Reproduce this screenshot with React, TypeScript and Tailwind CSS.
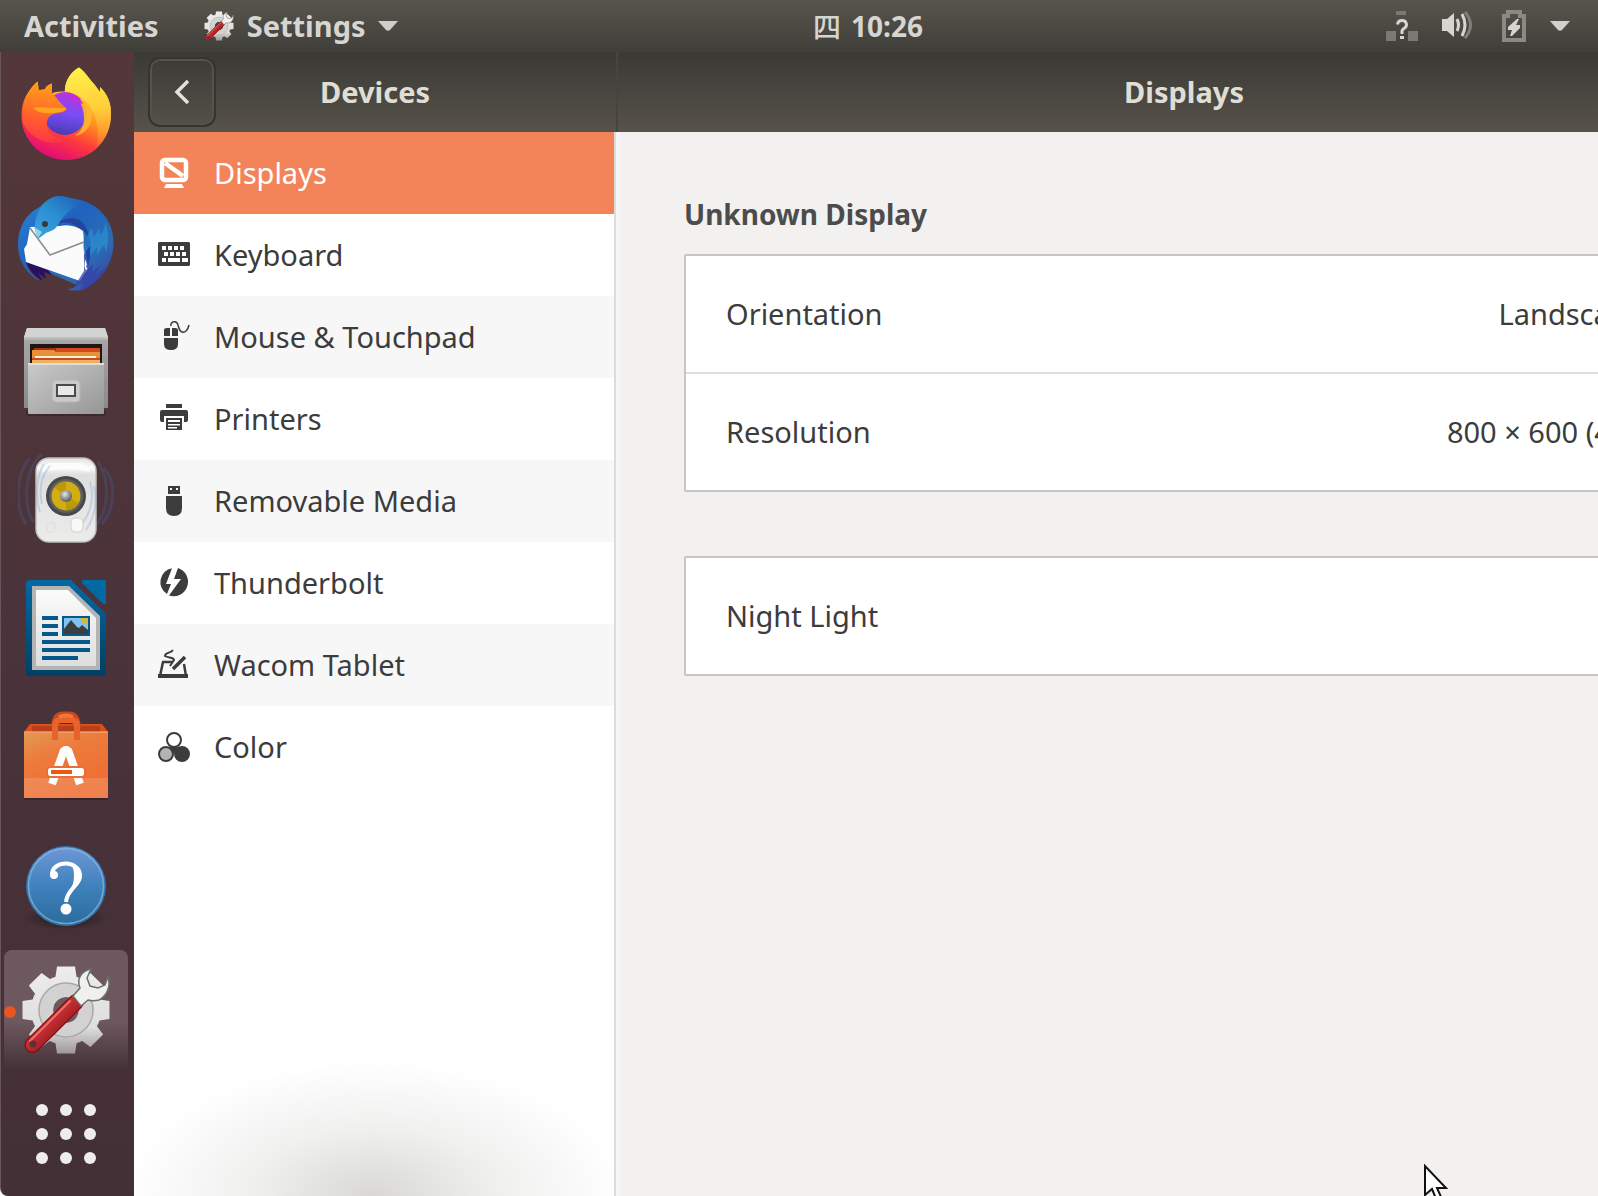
import type { ReactNode } from "react";

type IconProps = { className?: string };

function Firefox() {
  return (
    <svg viewBox="0 0 96 96" className="size-24" aria-hidden="true">
      <defs>
        <linearGradient id="ffBody" x1="0.75" y1="0.05" x2="0.35" y2="1">
          <stop offset="0" stopColor="#fff44f" />
          <stop offset="0.3" stopColor="#ffc02e" />
          <stop offset="0.5" stopColor="#ff8a1e" />
          <stop offset="0.72" stopColor="#ff3b3b" />
          <stop offset="1" stopColor="#e0087c" />
        </linearGradient>
        <linearGradient id="ffFlame" x1="0.5" y1="0" x2="0.6" y2="1">
          <stop offset="0" stopColor="#fff04a" />
          <stop offset="0.5" stopColor="#ffcf3a" />
          <stop offset="1" stopColor="#ff9a3c" stopOpacity="0.2" />
        </linearGradient>
        <linearGradient id="ffGlobe" x1="0.6" y1="0" x2="0.4" y2="1">
          <stop offset="0" stopColor="#b833e1" />
          <stop offset="0.5" stopColor="#7a4df5" />
          <stop offset="1" stopColor="#473bb0" />
        </linearGradient>
        <linearGradient id="ffHead" x1="0.4" y1="0" x2="0.3" y2="1">
          <stop offset="0" stopColor="#ffa21a" />
          <stop offset="0.5" stopColor="#ff6a28" />
          <stop offset="1" stopColor="#ff3348" />
        </linearGradient>
      </defs>
      <path
        d="M61 1.5C68 7 72 14 76 18l6 8v-5c8 8 11 16 11 27 0 26-19 46-44.500 46S3.500 74 3.500 50C3.500 34 10 24 19.700 15.500l1 9c2-1 4-1 6-1 1-3 4-5 7-6l0 10c4-2 8-2 13-2C47 14 53 6 61 1.500Z"
        fill="url(#ffBody)"
      />
      <path d="M61 1.500C68 7 72 14 76 18l6 8v-5c8 8 11 16 11 27 0 14-5 26-15 34 4-14 2-38-14-50-6-4-13-6-17-7C47 14 53 6 61 1.500Z" fill="url(#ffFlame)" />
      <circle cx="47" cy="47.500" r="21.500" fill="url(#ffGlobe)" />
      <path d="M60 33c8 0 14 8 14 17 0 10-7 18-17 20 6-4 9-10 9-17 0-8-2-14-6-20Z" fill="#ffb52e" opacity="0.9" />
      <path d="M56 34c2 2 4 3 9 4-2-5-6-8-11-9-3 0-3 2 2 5Z" fill="#c52fd6" />
      <path
        d="M19.700 15.500l1 9c2-1 4-1 6-1 1-3 4-5 7-6l0 10c5 3 7 9 15 15-1 4-6 4-11 5-6 1-9 5-9 11 1 8 7 14 16 16-9 5-30 2-40-18C3 38 11 22 19.700 15.500Z"
        fill="url(#ffHead)"
      />
      <path d="M15 42c10-2 20 1 33 0-1 4-7 4-12 5-7 1-16 0-21-5Z" fill="#ffb31f" opacity="0.8" />
    </svg>
  );
}

function Thunderbird() {
  return (
    <svg viewBox="0 0 96 96" className="size-24 overflow-visible" aria-hidden="true">
      <defs>
        <linearGradient id="tbBody" x1="0" y1="0" x2="1" y2="1">
          <stop offset="0" stopColor="#2a86d6" />
          <stop offset="0.4" stopColor="#1f63bf" />
          <stop offset="0.7" stopColor="#2b6db4" />
          <stop offset="1" stopColor="#3a3aa0" />
        </linearGradient>
        <linearGradient id="tbHead" x1="0.2" y1="1" x2="1" y2="0">
          <stop offset="0" stopColor="#3ba0e0" />
          <stop offset="0.5" stopColor="#2a8ed0" />
          <stop offset="1" stopColor="#1f5fb8" />
        </linearGradient>
      </defs>
      <path
        d="M34 4C42 0 50 4 58 5c22 4 37 20 37.500 43C96 68 84 86 66 95c-5 2-12 2-17 0 5 0 8-2 10-4L8 69c3 9 9 15 17 19C9 82 0 68 0 50 0 34 8 20 20 14Z"
        fill="url(#tbBody)"
      />
      <path d="M8 68c4 9 9 15 17 19l-5-8 8 6-2-7 8 3-4-5Z" fill="#2c0f5e" />
      <path d="M38 30c12-4 22 0 26 10 2 10 4 20 6 32 4-12 4-30-4-42C60 22 48 22 38 30Z" fill="#23449f" />
      <path
        d="M12 33l30-1c8-2 17 0 23 5 2 8-1 16 2 22-3 4 4 10 1 14 3 2 1 4-1 6l-5 8L8 68 6 55l3-5Z"
        fill="#fbfbfb"
      />
      <path d="M12 34L32 61L66 48" fill="none" stroke="#8d8d8d" strokeWidth="1.500" />
      <path
        d="M40 2c6 0 14 2 20 8-8 6-16 12-20 21-4 6-8 6-12 8l-8 6-3-9c-1-8 2-18 8-26 4-4 8-7 15-8Z"
        fill="url(#tbHead)"
      />
      <path d="M16 33l8 5-4 6Z" fill="#8ed6e2" />
      <circle cx="27" cy="30" r="3" fill="#3c3936" />
      <path
        d="M64 34c4 12 1 18 2 26l6-8 0 10 7-9 0 8 7-10 2 7c3-10 3-20-1-30 0 6-2 10-5 13l-1-7-5 9-2-9-5 8Z"
        fill="#2fa3e0"
        opacity="0.45"
      />
      <path d="M66 58c4 8-2 12 2 18l7-6-1 8 9-7-6 10 12-8c-6 10-12 18-26 24l2-8-9 4 10-16Z" fill="#3840a6" opacity="0.75" />
    </svg>
  );
}

function Files() {
  return (
    <svg viewBox="0 0 96 96" className="size-24" aria-hidden="true">
      <defs>
        <linearGradient id="fiBack" x1="0" y1="0" x2="0" y2="1">
          <stop offset="0" stopColor="#dcdcdc" />
          <stop offset="0.12" stopColor="#c2c2c2" />
          <stop offset="0.16" stopColor="#a6a6a6" />
          <stop offset="1" stopColor="#8a8a8a" />
        </linearGradient>
        <linearGradient id="fiFront" x1="0" y1="0" x2="1" y2="1">
          <stop offset="0" stopColor="#cacaca" />
          <stop offset="1" stopColor="#969696" />
        </linearGradient>
      </defs>
      <rect x="8" y="88" width="80" height="6" rx="3" fill="#000" opacity="0.2" />
      <path d="M9 6h78l3 9v71H6V15Z" fill="url(#fiBack)" />
      <path d="M9 6h78l3 9H6Z" fill="#d3d3d3" />
      <rect x="12" y="22" width="72" height="20" fill="#201714" />
      <path d="M16 26h66v4H16Z" fill="#a33412" />
      <path d="M38 26h44v6H38Z" fill="#d24a1b" />
      <path d="M14 28h22l2 2h44v12H14Z" fill="#e88f3c" />
      <rect x="17" y="34" width="61" height="2" fill="#fff0dc" />
      <rect x="14" y="36" width="68" height="2" fill="#c94a1b" />
      <rect x="14" y="38" width="68" height="3" fill="#f0b062" />
      <rect x="10" y="41" width="76" height="51" rx="1" fill="url(#fiFront)" />
      <rect x="10" y="41" width="76" height="2" fill="#dedede" />
      <rect x="34" y="58" width="28" height="22" rx="4" fill="#c9c9c9" stroke="#b5b5b5" />
      <rect x="39" y="63" width="18" height="11" fill="#e9e9e9" stroke="#4a4a4a" strokeWidth="2" />
    </svg>
  );
}

function Rhythmbox() {
  return (
    <svg viewBox="0 0 96 96" className="size-24" aria-hidden="true">
      <defs>
        <linearGradient id="rbBody" x1="0" y1="0" x2="0" y2="1">
          <stop offset="0" stopColor="#e4e4e2" />
          <stop offset="0.12" stopColor="#fafafa" />
          <stop offset="0.2" stopColor="#dededc" />
          <stop offset="1" stopColor="#ececeb" />
        </linearGradient>
        <radialGradient id="rbDome" cx="0.4" cy="0.35" r="0.7">
          <stop offset="0" stopColor="#e8e8e8" />
          <stop offset="1" stopColor="#4c4c50" />
        </radialGradient>
      </defs>
      <g fill="none" stroke="#4a5d96" strokeWidth="3" opacity="0.32">
        <path d="M12 8C-3 24-3 58 8 74" />
        <path d="M24 4C5 20 5 60 16 72" />
        <path d="M86 18C98 32 98 56 84 74" />
        <path d="M80 12C92 30 92 60 76 78" />
      </g>
      <rect x="18" y="8" width="60" height="84" rx="13" fill="url(#rbBody)" stroke="#bdbdbb" strokeWidth="1.500" />
      <path d="M24 22q1-8 8-9h32q7 1 8 9-24-6-48 0Z" fill="#fff" opacity="0.7" />
      <circle cx="48" cy="46" r="20" fill="#45484c" />
      <circle cx="48" cy="46" r="17" fill="#5d6063" />
      <circle cx="48" cy="46" r="14.500" fill="#d2ae12" />
      <path d="M48 46L36 37a15 15 0 0 1 12-6Z" fill="#ad8b04" opacity="0.6" />
      <path d="M48 46l13 7a15 15 0 0 1-13 8Z" fill="#ad8b04" opacity="0.6" />
      <circle cx="48" cy="46" r="6" fill="url(#rbDome)" />
      <g fill="none" stroke="#8fb0dc" strokeWidth="2" opacity="0.4">
        <path d="M32 16C23 26 21 40 24 54" />
        <path d="M26 14C18 26 17 48 22 62" />
        <path d="M72 32C76 46 74 62 62 76" />
        <path d="M76 36C80 54 76 68 68 80" />
      </g>
      <rect x="53" y="68" width="12" height="14" rx="4" fill="#f8f8f8" stroke="#d2d2d0" />
      <rect x="29" y="73" width="8" height="9" rx="2" fill="none" stroke="#dededc" />
    </svg>
  );
}

function Writer() {
  return (
    <svg viewBox="0 0 96 96" className="size-24 overflow-visible" aria-hidden="true">
      <defs>
        <linearGradient id="wrBlue" x1="0" y1="0" x2="0" y2="1">
          <stop offset="0" stopColor="#0369a3" />
          <stop offset="1" stopColor="#023f63" />
        </linearGradient>
        <linearGradient id="wrPage" x1="0" y1="0" x2="0" y2="1">
          <stop offset="0" stopColor="#fbfbfb" />
          <stop offset="1" stopColor="#dedede" />
        </linearGradient>
      </defs>
      <path d="M12 2H53L88 36V94q0 4-4 4H12q-4 0-4-4V6q0-4 4-4Z" fill="url(#wrBlue)" />
      <path d="M64 2H88V26H85L64 5Z" fill="#0369a3" />
      <path d="M14 8H51L82 38V92H14Z" fill="#b4b4b4" />
      <path d="M18 12H50L78 40V88H18Z" fill="url(#wrPage)" />
      <path d="M24 38h16v4H24Zm0 8h16v4H24Zm0 8h16v4H24Zm0 8h48v4H24Zm0 8h48v4H24Zm0 8h36v4H24Z" fill="#04588a" />
      <rect x="44" y="38" width="28" height="20" fill="#04588a" />
      <rect x="46" y="40" width="24" height="16" fill="#7fc3f2" />
      <path d="M62 40h8v7q-6 0-8-7Z" fill="#d3b93f" />
      <path d="M46 56v-5l7-9 6 7 2 1 3-3 6 5v4Z" fill="#3c3e40" />
    </svg>
  );
}

function Software() {
  return (
    <svg viewBox="0 0 96 96" className="size-24" aria-hidden="true">
      <defs>
        <linearGradient id="swBag" x1="0" y1="0" x2="0.5" y2="1">
          <stop offset="0" stopColor="#e39a53" />
          <stop offset="0.4" stopColor="#ec7b3c" />
          <stop offset="1" stopColor="#ef6d33" />
        </linearGradient>
      </defs>
      <rect x="6" y="90" width="84" height="4" rx="2" fill="#000" opacity="0.25" />
      <path d="M12 18H84L90 26H6Z" fill="#de4f17" />
      <path d="M14 20H82V26H14Z" fill="#b5401a" />
      <path d="M36 24V18q1-10 9-10h6q8 0 9 10v6" fill="none" stroke="#c8471b" strokeWidth="5" />
      <rect x="6" y="25.500" width="84" height="66.500" fill="url(#swBag)" />
      <rect x="6" y="72" width="84" height="20" fill="#fff" opacity="0.14" />
      <rect x="6" y="25.500" width="84" height="1.500" fill="#f59b6b" />
      <path d="M37 34V20q0-6 6-6h10q6 0 6 6v14" fill="none" stroke="#e8622c" strokeWidth="6" />
      <path d="M41 11q7-3 14 0" fill="none" stroke="#f0763c" strokeWidth="4" />
      <path d="M34 78L46 44h4L62 78" fill="none" stroke="#fff" strokeWidth="8" strokeLinejoin="bevel" />
      <rect x="28" y="60" width="40" height="12" rx="5" fill="#ec6d36" />
      <rect x="30" y="62" width="36" height="8" rx="2.500" fill="#fff" />
      <rect x="33" y="64" width="21" height="4" fill="#f0580f" />
    </svg>
  );
}

function Help() {
  return (
    <svg viewBox="0 0 96 96" className="size-24" aria-hidden="true">
      <defs>
        <linearGradient id="hpBlue" x1="0" y1="0" x2="0" y2="1">
          <stop offset="0" stopColor="#6f97d6" />
          <stop offset="0.5" stopColor="#3f82bd" />
          <stop offset="1" stopColor="#2a6c9c" />
        </linearGradient>
        <radialGradient id="hpShade">
          <stop offset="0.6" stopColor="#000" stopOpacity="0.22" />
          <stop offset="1" stopColor="#000" stopOpacity="0" />
        </radialGradient>
      </defs>
      <ellipse cx="48" cy="84" rx="42" ry="12" fill="url(#hpShade)" />
      <circle cx="48" cy="52" r="39.500" fill="url(#hpBlue)" stroke="#2f72ae" />
      <circle cx="48" cy="52" r="37.500" fill="none" stroke="#8fb9de" strokeWidth="1.500" opacity="0.7" />
      <path
        d="M34 41C34 33 41 29.500 48 29.500S61.500 34 61.500 42C61.500 52 49 55 48 68"
        fill="none"
        stroke="#fff"
        strokeWidth="4"
      />
      <path d="M52 29c8 1 12 6 12 13 0 8-9 13-14 20 3-8 6-12 6-20 0-6-1-10-4-13Z" fill="#fff" />
      <circle cx="36" cy="41" r="4" fill="#fff" />
      <circle cx="48" cy="75" r="5.500" fill="#fff" />
    </svg>
  );
}

const teeth = [0, 45, 90, 135, 180, 225, 270, 315];

function SettingsGear({ className = "size-24" }: IconProps) {
  return (
    <svg viewBox="0 0 96 96" className={className} aria-hidden="true">
      <defs>
        <linearGradient id="sgHandle" x1="0" y1="0" x2="1" y2="1">
          <stop offset="0.3" stopColor="#d93a38" />
          <stop offset="0.7" stopColor="#9c1a22" />
        </linearGradient>
        <linearGradient id="sgFade" gradientUnits="userSpaceOnUse" x1="0" y1="5" x2="0" y2="92">
          <stop offset="0" stopColor="#ededed" />
          <stop offset="0.7" stopColor="#dedede" />
          <stop offset="1" stopColor="#9f959b" />
        </linearGradient>
        <mask id="sgHole">
          <rect width="96" height="96" fill="#fff" />
          <circle cx="48" cy="48" r="13" fill="#000" />
        </mask>
        <mask id="sgShape">
          <circle cx="48" cy="48" r="35" fill="#fff" />
          {teeth.map((angle) => (
            <path key={angle} d="M37 18L39 4.500H57L59 18Z" fill="#fff" transform={`rotate(${angle} 48 48)`} />
          ))}
          <circle cx="48" cy="48" r="13" fill="#000" />
        </mask>
      </defs>
      <rect width="96" height="96" fill="url(#sgFade)" mask="url(#sgShape)" />
      <circle cx="48" cy="48" r="27" fill="#d3d2d3" stroke="#aaa8aa" strokeWidth="1.500" mask="url(#sgHole)" />
      <path d="M14.500 83L58 40" stroke="#7e1118" strokeWidth="16" strokeLinecap="round" />
      <path d="M14.500 83L58 40" stroke="url(#sgHandle)" strokeWidth="13.500" strokeLinecap="round" />
      <path d="M12 79L52 39" stroke="#e8746c" strokeWidth="2" strokeLinecap="round" />
      <path
        d="M55 34L62 26C58 16 64 9 73 7l-4 9 3 8 8 2 7-3 3-8c3 9-1 19-9 23-4 1-8 1-11 0l-7 6Z"
        fill="#f0f1ec"
        stroke="#6e706a"
        strokeWidth="1.500"
      />
      <circle cx="15" cy="82" r="3.500" fill="#5c3034" />
    </svg>
  );
}

function AppGrid() {
  const stops = [24, 48, 72];
  return (
    <svg viewBox="0 0 96 96" className="size-24" fill="#eeedec" aria-hidden="true">
      {stops.map((y) => stops.map((x) => <circle key={`${x}-${y}`} cx={x} cy={y} r="6" />))}
    </svg>
  );
}

function SideIcon({ children }: { children: ReactNode }) {
  return (
    <svg viewBox="0 0 32 32" className="size-8 shrink-0 overflow-visible" fill="currentColor" aria-hidden="true">
      {children}
    </svg>
  );
}

const devices: { label: string; icon: ReactNode }[] = [
  {
    label: "Displays",
    icon: (
      <>
        <rect x="4" y="3" width="24" height="20" rx="3" fill="none" stroke="currentColor" strokeWidth="4.500" />
        <path d="M7 6L25 19" stroke="currentColor" strokeWidth="4.500" />
        <path d="M8 27H24l2 4H6Z" />
      </>
    ),
  },
  {
    label: "Keyboard",
    icon: (
      <path
        fillRule="evenodd"
        d="M1 3H31l1 1V26l-1 1H1l-1-1V4ZM4 7v4h4V7Zm6 0v4h4V7Zm6 0v4h4V7Zm6 0v4h4V7ZM6 13v4h4v-4Zm6 0v4h4v-4Zm6 0v4h4v-4Zm6 0v4h4v-4ZM4 19v4h4v-4Zm6 0v4h12v-4Zm14 0v4h6v-4Z"
      />
    ),
  },
  {
    label: "Mouse & Touchpad",
    icon: (
      <>
        <path d="M6 15V9q0-2 3-2h3v8ZM14 15V7h3q3 0 3 2v6ZM6 17H20v6q0 6-7 6t-7-6Z" />
        <path d="M13 5C12 0 19-1 20 4C21 7 21 10 24 11S30 9 31 4" fill="none" stroke="currentColor" strokeWidth="1.500" />
      </>
    ),
  },
  {
    label: "Printers",
    icon: (
      <path
        fillRule="evenodd"
        d="M8 1H24V5H8ZM4 7H28q2 0 2 2V17q0 2-2 2H26V13H6V19H4q-2 0-2-2V9q0-2 2-2ZM8 15H24V27H8ZM10 17v2H22V17ZM10 21v1.500H22V21ZM10 24v1.500h9V24Z"
      />
    ),
  },
  {
    label: "Removable Media",
    icon: (
      <path
        fillRule="evenodd"
        d="M10 1H22V9H10ZM12 3v2h2V3ZM18 3v2h2V3ZM8 11H24V23q0 8-8 8t-8-8Z"
      />
    ),
  },
  {
    label: "Thunderbolt",
    icon: (
      <>
        <path d="M14 1.300L8 17h5L9 27A14 14 0 0 1 14 1.300Z" />
        <path d="M20 1A14 14 0 1 1 11 28.600L23 12H16Z" />
      </>
    ),
  },
  {
    label: "Wacom Tablet",
    icon: (
      <>
        <path d="M4 13H15M5 13L2 27H28L26 15" fill="none" stroke="currentColor" strokeWidth="2.500" />
        <path d="M0 25H30V29H0Z" />
        <path d="M27 8L15 20" stroke="currentColor" strokeWidth="3.500" />
        <path d="M15 1C12 5 7 3 7 7C10 9 16 8 16 11L12 17" fill="none" stroke="currentColor" strokeWidth="2" />
      </>
    ),
  },
  {
    label: "Color",
    icon: (
      <g stroke="currentColor" strokeWidth="2">
        <circle cx="16" cy="9" r="7" fill="#fff" />
        <circle cx="8" cy="23" r="7" fill="#b3b3b3" />
        <circle cx="24" cy="23" r="7" />
        <path d="M12 16h8l-3 6h-3Z" stroke="none" />
      </g>
    ),
  },
];

const launchers: { label: string; icon: ReactNode }[] = [
  { label: "Firefox", icon: <Firefox /> },
  { label: "Thunderbird", icon: <Thunderbird /> },
  { label: "Files", icon: <Files /> },
  { label: "Rhythmbox", icon: <Rhythmbox /> },
  { label: "LibreOffice Writer", icon: <Writer /> },
  { label: "Ubuntu Software", icon: <Software /> },
  { label: "Help", icon: <Help /> },
];

function Caret() {
  return (
    <svg viewBox="0 0 20 10" className="h-2.5 w-5" fill="#cfcfcb" aria-hidden="true">
      <path d="M0 0H20L12 9q-2 1.500-4 0Z" />
    </svg>
  );
}

function TopBar() {
  return (
    <header className="grid h-13 shrink-0 grid-cols-[1fr_auto_1fr] items-center bg-linear-to-b from-[#59554c] to-[#3f3e39] pr-7 pl-6 text-[29px] leading-10 font-bold text-[#d6d5d2] [text-shadow:0_0_3px_#22211e]">
      <div className="flex items-center gap-11">
        <button>Activities</button>
        <button className="flex items-center gap-3">
          <SettingsGear className="size-8" />
          <span>Settings</span>
          <Caret />
        </button>
      </div>
      <button className="ml-[142px] flex items-center gap-2.5 text-[28px]">
        <span className="font-['Noto_Sans_CJK_SC',sans-serif] font-medium">四</span>
        <span>10:26</span>
      </button>
      <button aria-label="System menu" className="flex items-center justify-self-end">
        <svg viewBox="0 0 32 32" className="mr-6 size-8" aria-hidden="true">
          <path d="M0 21H10V31H0ZM22 21H32V31H22ZM10 1H20V5H10Z" fill="#7b7974" />
          <path d="M11.500 14.500Q12 10.500 16 10.500T20.500 14.500Q20.500 17 18 18.500T16 22.500V24" fill="none" stroke="#d6d5d2" strokeWidth="3" />
          <path d="M14 26H18V29H14Z" fill="#d6d5d2" />
        </svg>
        <svg viewBox="0 0 30 32" className="mr-[30px] h-8 w-[30px]" fill="none" strokeWidth="3" aria-hidden="true">
          <path d="M0 9H5L12 3V27L5 21H0Z" fill="#d6d5d2" />
          <path d="M15 9Q18 15 15 21M20 4Q26 15 20 26" stroke="#d6d5d2" />
          <path d="M23 2Q34 15 23 28" stroke="#807e79" />
        </svg>
        <svg viewBox="0 0 24 32" className="mr-6 h-8 w-6" aria-hidden="true">
          <path fillRule="evenodd" d="M4 0H20V4H24V32H0V4H4ZM8 4V8H4V28H20V8H16V4Z" fill="#8b8984" />
          <path d="M15 9L6 17V20H10L8 26H10L18 18V15H14L17 9Z" fill="#d6d5d2" />
        </svg>
        <Caret />
      </button>
    </header>
  );
}

function Dock() {
  return (
    <nav
      aria-label="Dock"
      className="flex w-[134px] shrink-0 flex-col gap-2 rounded-bl-lg border-l border-[#68565a] bg-linear-to-b from-[#543739] via-[#4a333a] to-[#432f36] pt-0.5 pl-[3px]"
    >
      {launchers.map(({ label, icon }) => (
        <button key={label} aria-label={label} className="flex h-[120px] w-[124px] shrink-0 items-center justify-center">
          {icon}
        </button>
      ))}
      <button
        aria-label="Settings"
        className="relative flex h-[120px] w-[124px] shrink-0 items-center justify-center rounded-t-lg bg-linear-to-b from-[#6c585e] from-60% to-transparent"
      >
        <SettingsGear />
        <span className="absolute top-14 left-0 size-3 rounded-full bg-[#e95420]" />
      </button>
      <button aria-label="Show Applications" className="flex h-28 w-[124px] shrink-0 items-center justify-center">
        <AppGrid />
      </button>
    </nav>
  );
}

function Sidebar() {
  return (
    <aside className="flex w-[482px] shrink-0 flex-col">
      <div className="grid h-20 shrink-0 grid-cols-[68px_1fr_68px] items-center bg-linear-to-b from-[#3a3934] to-[#57534b] px-3.5">
        <button
          aria-label="Back"
          className="flex h-[70px] w-[68px] items-center justify-center rounded-xl border-2 border-[#35342f] inset-ring-2 inset-ring-[#53524c]"
        >
          <svg viewBox="0 0 16 24" className="h-6 w-4" fill="none" stroke="#e4e0da" strokeWidth="3.500" aria-hidden="true">
            <path d="M14 1L3 12L14 23" />
          </svg>
        </button>
        <h1 className="text-center text-[29px] leading-10 font-bold text-[#e0ddd5]">Devices</h1>
      </div>
      <div className="flex grow flex-col border-r-2 border-[#dcdcdc] bg-white bg-[radial-gradient(ellipse_250px_135px_at_50%_100%,#d9d8d6,#f0f0ef_50%,transparent)]">
        {devices.map(({ label, icon }, i) => (
          <button
            key={label}
            aria-current={i === 0 ? "page" : undefined}
            className={
              i === 0
                ? "flex h-[82px] shrink-0 items-center gap-6 bg-[#f38459] pl-6 text-left text-white"
                : "flex h-[82px] shrink-0 items-center gap-6 bg-white pl-6 text-left text-[#3c3c3c] odd:bg-[#f7f7f7]"
            }
          >
            <SideIcon>{icon}</SideIcon>
            <span>{label}</span>
          </button>
        ))}
      </div>
    </aside>
  );
}

function Row({ label, value }: { label: string; value?: string }) {
  return (
    <li>
      <button className="flex h-29 w-full items-center justify-between px-10 text-left">
        <span>{label}</span>
        {value && <span>{value}</span>}
      </button>
    </li>
  );
}

function DisplaysPanel() {
  return (
    <main className="min-w-0 grow overflow-hidden">
      {/* The window is wider than the screen and runs past its right edge. */}
      <div className="flex h-full w-[calc(100%+152px)] flex-col">
        <div className="flex h-20 shrink-0 items-center justify-center border-l-2 border-[#45443e] bg-linear-to-b from-[#3a3934] to-[#57534b]">
          <h2 className="text-[29px] leading-10 font-bold text-[#e0ddd5]">Displays</h2>
        </div>
        <div className="flex grow flex-col border-l-4 border-[#f6f5f5] bg-[#f2f1ef] px-16 pt-[62px] text-[#3c3c3c]">
          <h3 className="mb-5 text-[28px] leading-10 font-bold text-[#4c4c4c]">Unknown Display</h3>
          <ul className="mb-16 divide-y-2 divide-[#dedede] rounded-xs border-2 border-[#c8c6c4] bg-white">
            <Row label="Orientation" value="Landscape" />
            <Row label="Resolution" value="800 × 600 (4:3)" />
          </ul>
          <ul className="rounded-xs border-2 border-[#c8c6c4] bg-white">
            <Row label="Night Light" />
          </ul>
        </div>
      </div>
    </main>
  );
}

export default function App() {
  return (
    <div className="relative flex h-screen flex-col overflow-hidden bg-white font-['Noto_Sans','Noto_Sans_CJK_SC',sans-serif] text-[29px] leading-10">
      <TopBar />
      <div className="flex min-h-0 grow">
        <Dock />
        <Sidebar />
        <DisplaysPanel />
      </div>
      <svg viewBox="0 0 26 40" className="absolute -bottom-2 left-[1423px] h-10 w-[26px]" aria-hidden="true">
        <path d="M2 2V31L9 25L14 37L19 35L14 24H23Z" fill="#fff" stroke="#111" strokeWidth="2" />
      </svg>
    </div>
  );
}
